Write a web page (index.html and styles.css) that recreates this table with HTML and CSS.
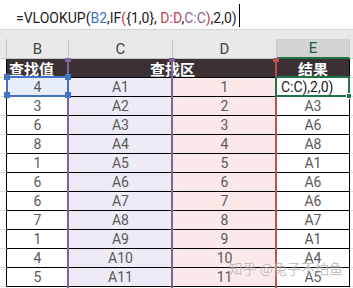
FILE: index.html
```html
<!DOCTYPE html>
<html lang="zh-CN">
<head>
<meta charset="utf-8">
<title>VLOOKUP 反向查找</title>
<link rel="stylesheet" href="styles.css">
</head>
<body>
<div class="formula">
  <span class="ftext">=VLOOKUP(<span class="ref-b">B2</span>,IF<span class="paren">(</span>{1,0}, <span class="ref-d">D:D</span>,<span class="ref-c">C:C</span><span class="paren">)</span>,2,0)</span><span class="caret"></span>
</div>
<div class="band"></div>
<div class="sheet">
  <!-- column letters -->
  <div class="hd"></div><div class="hd">B</div><div class="hd">C</div><div class="hd">D</div><div class="hd hd-sel">E</div><div class="hd hd-last"></div>

  <!-- title row -->
  <div class="gut"></div><div class="th th-left">查找值</div><div class="th th-span">查找区</div><div class="th">结果</div><div class="gut-r"></div>

  <div class="gut"></div><div class="td td-b2">4</div><div class="td td-c">A1</div><div class="td td-d">1</div><div class="td td-edit">C:C),2,0)</div><div class="gut-r"></div>
  <div class="gut"></div><div class="td">3</div><div class="td td-c">A2</div><div class="td td-d">2</div><div class="td">A3</div><div class="gut-r"></div>
  <div class="gut"></div><div class="td">6</div><div class="td td-c">A3</div><div class="td td-d">3</div><div class="td">A6</div><div class="gut-r"></div>
  <div class="gut"></div><div class="td">8</div><div class="td td-c">A4</div><div class="td td-d">4</div><div class="td">A8</div><div class="gut-r"></div>
  <div class="gut"></div><div class="td">1</div><div class="td td-c">A5</div><div class="td td-d">5</div><div class="td">A1</div><div class="gut-r"></div>
  <div class="gut"></div><div class="td">6</div><div class="td td-c">A6</div><div class="td td-d">6</div><div class="td">A6</div><div class="gut-r"></div>
  <div class="gut"></div><div class="td">6</div><div class="td td-c">A7</div><div class="td td-d">7</div><div class="td">A6</div><div class="gut-r"></div>
  <div class="gut"></div><div class="td">7</div><div class="td td-c">A8</div><div class="td td-d">8</div><div class="td">A7</div><div class="gut-r"></div>
  <div class="gut"></div><div class="td">1</div><div class="td td-c">A9</div><div class="td td-d">9</div><div class="td">A1</div><div class="gut-r"></div>
  <div class="gut"></div><div class="td">4</div><div class="td td-c">A10</div><div class="td td-d">10</div><div class="td">A4</div><div class="gut-r"></div>
  <div class="gut"></div><div class="td">5</div><div class="td td-c">A11</div><div class="td td-d">11</div><div class="td">A5</div><div class="gut-r"></div>

  <div class="gut gut-end"></div><div class="blank"></div><div class="blank"></div><div class="blank"></div><div class="blank"></div><div class="gut-r"></div>

  <!-- reference highlights drawn over the grid while editing -->
  <div class="range-d"></div>
  <div class="range-c"></div>
  <div class="tick tick-c1"></div>
  <div class="tick tick-c2"></div>
  <div class="tick tick-d"></div>

  <div class="sel-b"></div>
  <div class="knob knob-tl"></div>
  <div class="knob knob-tr"></div>
  <div class="knob knob-bl"></div>
  <div class="knob knob-br"></div>

  <div class="sel-e"></div>
  <div class="fill-handle"></div>

  <div class="mark">知乎 @兔子不怕鱼</div>
</div>
</body>
</html>
```
FILE: styles.css
```css
* {
  box-sizing: border-box;
}

body {
  margin: 0;
  width: 353px;
  height: 288px;
  overflow: hidden;
  background: #fff;
  font-family: Roboto, "Liberation Sans", "Noto Sans CJK SC", sans-serif;
}

/* formula bar */
.formula {
  height: 30px;
  border-bottom: 1px solid #d4d4d4;
  display: flex;
  align-items: flex-start;
  padding-left: 16px;
  font-size: 14px;
  color: #222;
  white-space: nowrap;
}

.ftext {
  margin-top: 10px;
}

.ref-b { color: #3f6fc4; }
.ref-d { color: #c0405a; }
.ref-c { color: #8064a2; }
.paren { color: #c0405a; }

.caret {
  width: 1px;
  height: 23px;
  margin-top: 4px;
  margin-left: 2px;
  background: #000;
}

.band {
  height: 9px;
  background: #e9e9e9;
}

/* worksheet grid */
.sheet {
  position: relative;
  height: 249px;
  overflow: hidden;
  display: grid;
  grid-template-columns: 7px 62px 104px 104px 73px 10px;
  grid-template-rows: 20px repeat(13, 19px);
}

.hd {
  background: #e9e9e9;
  border-right: 1px solid #c6c6c6;
  border-bottom: 1px solid #c6c6c6;
  display: flex;
  align-items: center;
  justify-content: center;
  font-size: 15px;
  color: #444;
}

.hd-sel {
  background: #d3d3d3;
  border-bottom: 2px solid #217346;
  color: #1f5e3a;
}

.hd-last {
  border-right: none;
}

.gut {
  border-right: 1px solid #000;
  border-bottom: 1px solid #dadada;
}

.gut-end {
  border-right-color: #dadada;
}

.gut-r {
  border-bottom: 1px solid #dadada;
}

.th {
  background: #3b3134;
  color: #fff;
  font-family: "Noto Sans CJK SC", sans-serif;
  font-weight: bold;
  font-size: 15px;
  border-right: 1px solid #000;
  border-bottom: 1px solid #000;
  display: flex;
  align-items: center;
  justify-content: center;
}

.th-left {
  justify-content: flex-start;
  padding-left: 2px;
}

.th-span {
  grid-column: span 2;
}

.td {
  border-right: 1px solid #000;
  border-bottom: 1px solid #000;
  text-align: center;
  font-size: 14px;
  line-height: 17px;
  padding-top: 1px;
  color: #595959;
  white-space: nowrap;
}

.td-b2 { background: #e8eef9; }
.td-c { background: #eeebf6; }
.td-d { background: #fbe9e9; }

.td-edit {
  text-align: left;
  padding-left: 4px;
  color: #1a1a1a;
}

.blank {
  border-right: 1px solid #dadada;
  border-bottom: 1px solid #dadada;
}

/* column range outlines */
.range-c,
.range-d {
  position: absolute;
  top: 19px;
  bottom: 0;
  width: 106px;
}

.range-c {
  left: 67px;
  border-left: 2px solid #8064a2;
  border-right: 2px solid #8064a2;
}

.range-d {
  left: 171px;
  border-right: 2px solid #c0504d;
}

.tick {
  position: absolute;
  top: 19px;
  width: 6px;
  height: 4px;
}

.tick-c1 { left: 65px; background: #8064a2; }
.tick-c2 { left: 169px; background: #8064a2; }
.tick-d { left: 273px; background: #c0504d; }

/* B2 reference box */
.sel-b {
  position: absolute;
  left: 6px;
  top: 37px;
  width: 63px;
  height: 21px;
  border: 2px solid #4472c4;
}

.knob {
  position: absolute;
  width: 6px;
  height: 6px;
  background: #4472c4;
}

.knob-tl { left: 4px; top: 35px; }
.knob-tr { left: 65px; top: 35px; }
.knob-bl { left: 4px; top: 53px; }
.knob-br { left: 65px; top: 53px; }

/* active cell E2 */
.sel-e {
  position: absolute;
  left: 275px;
  top: 37px;
  width: 75px;
  height: 21px;
  border: 2px solid #217346;
}

.fill-handle {
  position: absolute;
  left: 346px;
  top: 54px;
  width: 6px;
  height: 6px;
  background: #217346;
  border: 1px solid #fff;
}

.mark {
  position: absolute;
  right: 10px;
  bottom: 10px;
  font-family: "Noto Sans CJK SC", sans-serif;
  font-size: 14px;
  color: rgba(140, 140, 140, 0.55);
  text-shadow: 0 0 2px rgba(255, 255, 255, 0.8);
  white-space: nowrap;
}
```
